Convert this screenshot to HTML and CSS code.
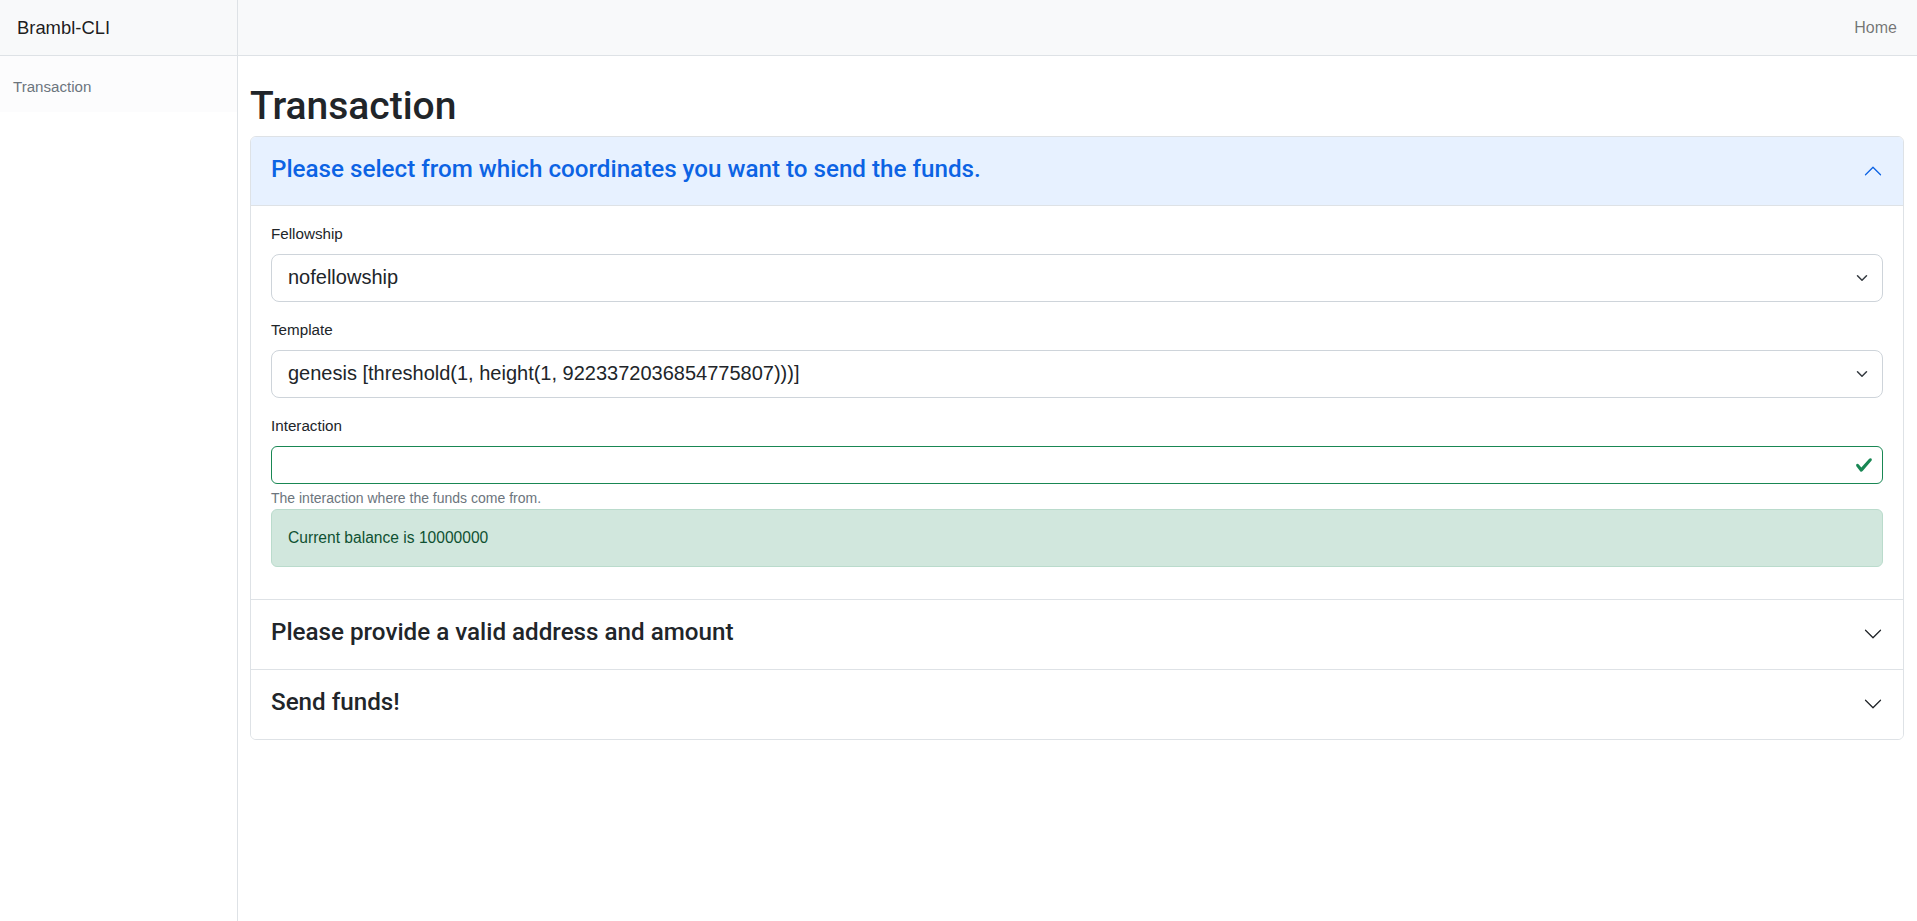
FILE: index.html
```html
<!DOCTYPE html>
<html lang="en">
<head>
<meta charset="utf-8">
<title>Brambl-CLI</title>
<link rel="stylesheet" href="styles.css">
</head>
<body>
<div class="app">
  <aside class="sidebar">
    <div class="brand">Brambl-CLI</div>
    <nav class="side-nav">
      <a class="side-link">Transaction</a>
    </nav>
  </aside>
  <div class="main">
    <header class="topbar">
      <a class="top-link">Home</a>
    </header>
    <main class="content">
      <h1 class="page-title">Transaction</h1>
      <div class="accordion">
        <section class="acc-item">
          <div class="acc-header active">
            <span class="acc-title">Please select from which coordinates you want to send the funds.</span>
            <svg class="chev chev-up" viewBox="0 0 16 16"><path fill-rule="evenodd" d="M1.646 4.646a.5.5 0 0 1 .708 0L8 10.293l5.646-5.647a.5.5 0 0 1 .708.708l-6 6a.5.5 0 0 1-.708 0l-6-6a.5.5 0 0 1 0-.708z"/></svg>
          </div>
          <div class="acc-body">
            <div class="field">
              <label class="label">Fellowship</label>
              <div class="select">
                <span class="select-value">nofellowship</span>
                <svg class="select-caret" viewBox="0 0 16 16"><path d="m2 5 6 6 6-6"/></svg>
              </div>
            </div>
            <div class="field">
              <label class="label">Template</label>
              <div class="select">
                <span class="select-value">genesis [threshold(1, height(1, 9223372036854775807)))]</span>
                <svg class="select-caret" viewBox="0 0 16 16"><path d="m2 5 6 6 6-6"/></svg>
              </div>
            </div>
            <div class="field field-last">
              <label class="label">Interaction</label>
              <div class="input is-valid">
                <svg class="check" viewBox="0 0 8 8"><path d="M2.3 6.73.6 4.53c-.4-1.04.46-1.4 1.1-.8l1.1 1.4 3.4-3.8c.6-.63 1.6-.27 1.2.7l-4 4.6c-.43.5-.8.4-1.1.1z"/></svg>
              </div>
              <div class="form-text">The interaction where the funds come from.</div>
            </div>
            <div class="alert">Current balance is 10000000</div>
          </div>
        </section>
        <section class="acc-item">
          <div class="acc-header">
            <span class="acc-title">Please provide a valid address and amount</span>
            <svg class="chev" viewBox="0 0 16 16"><path fill-rule="evenodd" d="M1.646 4.646a.5.5 0 0 1 .708 0L8 10.293l5.646-5.647a.5.5 0 0 1 .708.708l-6 6a.5.5 0 0 1-.708 0l-6-6a.5.5 0 0 1 0-.708z"/></svg>
          </div>
        </section>
        <section class="acc-item">
          <div class="acc-header">
            <span class="acc-title">Send funds!</span>
            <svg class="chev" viewBox="0 0 16 16"><path fill-rule="evenodd" d="M1.646 4.646a.5.5 0 0 1 .708 0L8 10.293l5.646-5.647a.5.5 0 0 1 .708.708l-6 6a.5.5 0 0 1-.708 0l-6-6a.5.5 0 0 1 0-.708z"/></svg>
          </div>
        </section>
      </div>
    </main>
  </div>
</div>
</body>
</html>
```

FILE: styles.css
```css
html, body {
  margin: 0;
  height: 100%;
}

body {
  font-family: "Liberation Sans", Arial, sans-serif;
  color: #212529;
  background: #fff;
}

.app {
  display: flex;
  min-height: 100vh;
}

.sidebar {
  width: 237px;
  flex-shrink: 0;
  border-right: 1px solid #dee2e6;
}

.brand {
  height: 55px;
  border-bottom: 1px solid #dee2e6;
  background: #f8f9fa;
  display: flex;
  align-items: center;
  padding-left: 17px;
  font-size: 18.4px;
  color: rgba(0, 0, 0, 0.9);
}

.side-nav {
  display: flex;
  flex-direction: column;
}

.side-link {
  display: flex;
  align-items: center;
  box-sizing: border-box;
  height: 56px;
  padding: 4px 0 0 13px;
  background: #fcfcfd;
  font-size: 15.1px;
  color: #6c757d;
}

.main {
  flex: 1;
  min-width: 0;
}

.topbar {
  height: 55px;
  border-bottom: 1px solid #dee2e6;
  background: #f8f9fa;
  display: flex;
  align-items: center;
  justify-content: flex-end;
  padding-right: 20px;
}

.top-link {
  font-size: 16px;
  color: rgba(0, 0, 0, 0.55);
}

.content {
  padding: 27px 13px 0 12px;
}

.page-title {
  margin: 0 0 6px;
  font-family: Roboto, "Liberation Sans", sans-serif;
  font-weight: 500;
  font-size: 39px;
  line-height: 1.2;
  color: #212529;
}

.accordion {
  border: 1px solid #dee2e6;
  border-radius: 6px;
  overflow: hidden;
}

.acc-item + .acc-item {
  border-top: 1px solid #dee2e6;
}

.acc-header {
  display: flex;
  align-items: center;
  padding: 14px 20px 19px;
  font-family: Roboto, "Liberation Sans", sans-serif;
  font-weight: 500;
  font-size: 24.2px;
  line-height: 36px;
  color: #212529;
  background: #fff;
}

.acc-header.active {
  background: #e7f1ff;
  color: #0c63e4;
  box-shadow: inset 0 -1px 0 #dee2e6;
}

.chev {
  width: 20px;
  height: 20px;
  margin-left: auto;
  flex-shrink: 0;
  fill: #212529;
  position: relative;
  top: 2px;
}

.chev-up {
  fill: #0c63e4;
  transform: rotate(180deg);
}

.acc-body {
  padding: 16px 20px;
}

.field {
  margin-bottom: 16px;
}

.field-last {
  margin-bottom: 0;
}

.label {
  display: block;
  font-size: 15.2px;
  line-height: 24px;
  margin-bottom: 8px;
  color: #212529;
}

.select {
  display: flex;
  align-items: center;
  height: 48px;
  box-sizing: border-box;
  border: 1px solid #ced4da;
  border-radius: 8px;
  padding: 0 12px 0 16px;
  font-size: 20px;
  color: #212529;
  background: #fff;
}

.select-value {
  flex: 1;
  white-space: nowrap;
}

.select-caret {
  width: 16px;
  height: 12px;
  flex-shrink: 0;
  fill: none;
  stroke: #343a40;
  stroke-width: 2;
  stroke-linecap: round;
  stroke-linejoin: round;
}

.input {
  height: 38px;
  box-sizing: border-box;
  border: 1px solid #ced4da;
  border-radius: 6px;
  display: flex;
  align-items: center;
  justify-content: flex-end;
  padding-right: 9px;
  background: #fff;
}

.input.is-valid {
  border-color: #198754;
}

.check {
  width: 18px;
  height: 18px;
  fill: #198754;
}

.form-text {
  margin-top: 4px;
  font-size: 14px;
  line-height: 21px;
  color: #6c757d;
}

.alert {
  padding: 16px;
  border: 1px solid #badbcc;
  border-radius: 6px;
  background: #d1e7dd;
  color: #0f5132;
  font-size: 15.6px;
  line-height: 24px;
  margin-bottom: 16px;
}
```
